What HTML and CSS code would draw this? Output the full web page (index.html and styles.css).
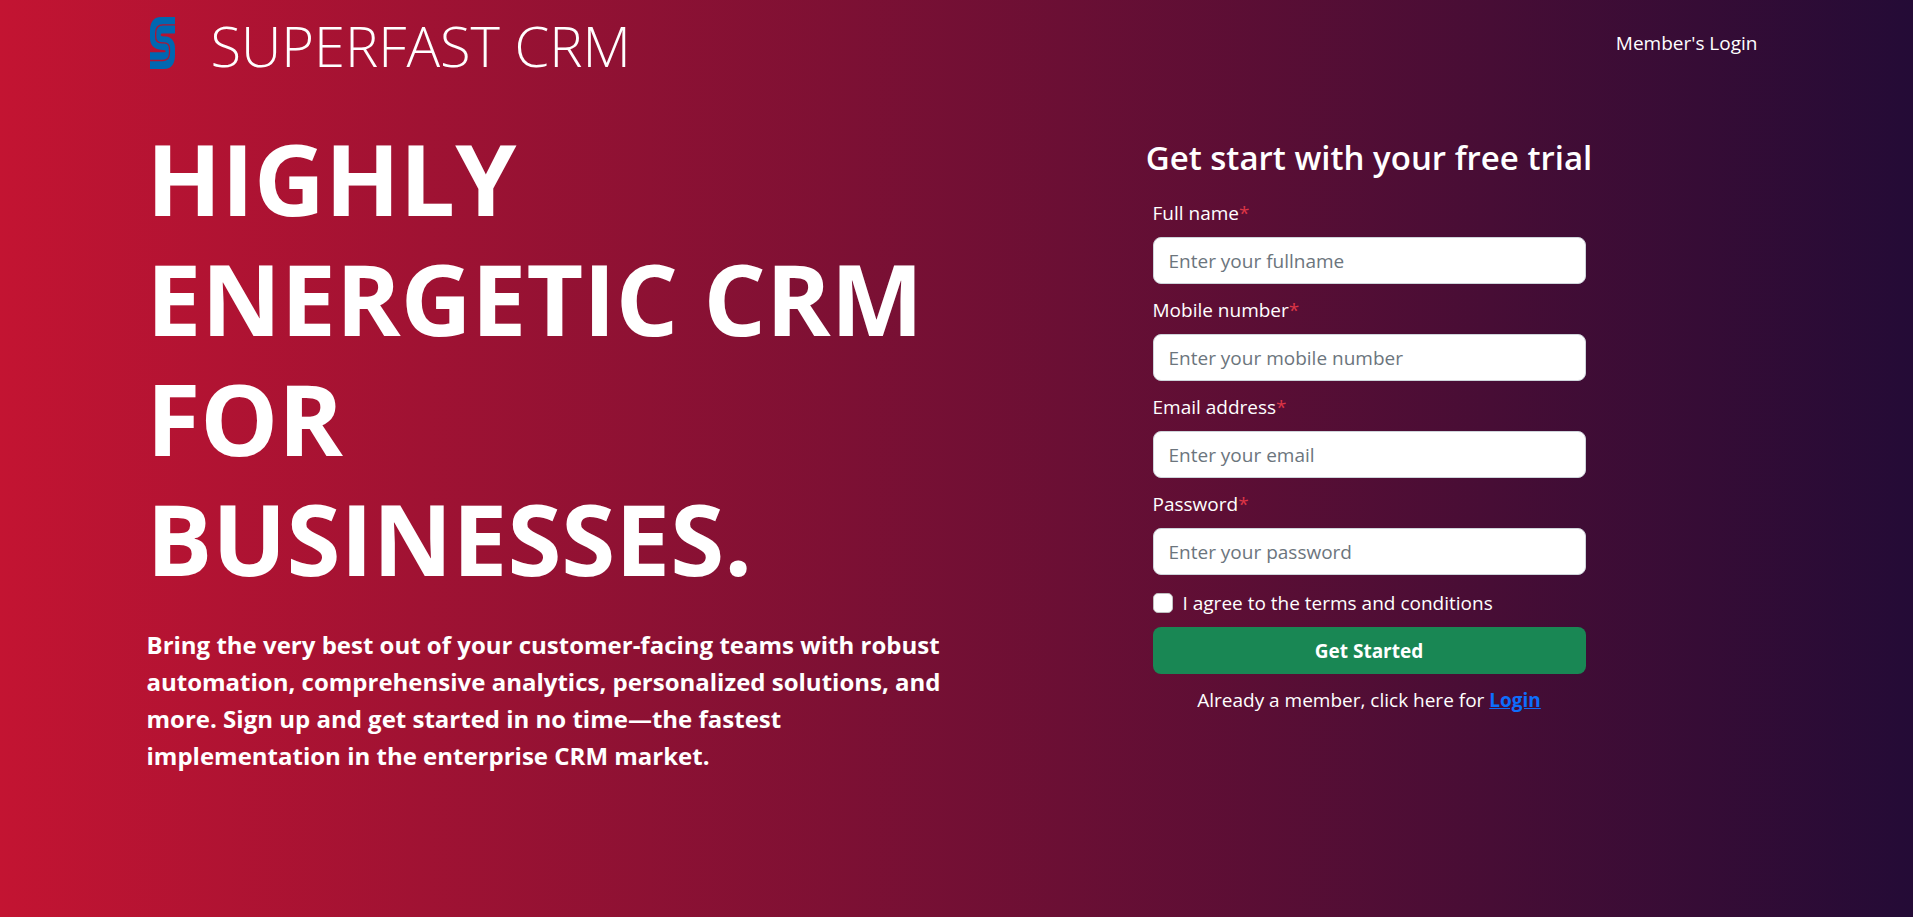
FILE: index.html
```html
<!DOCTYPE html>
<html lang="en">
<head>
<meta charset="utf-8">
<meta name="viewport" content="width=device-width, initial-scale=1">
<title>Superfast CRM</title>
<link rel="stylesheet" href="styles.css">
</head>
<body>
<div class="container">
  <header class="header">
    <div class="brand">
      <svg class="brand-mark" viewBox="0 0 25 52" aria-hidden="true">
        <path fill="#0067b1" d="M25 0H11C3 0 0 6 0 14v7c0 7 4 10.500 9 11.500l6 .7c1 .3 .8 2-.5 2H0V52h14c8 0 11-6 11-14v-7c0-7-4-11-9-11.500l-4-.3c-2-.5-1.500-2.700.5-2.700H25z"/>
        <path fill="none" stroke="#b11432" stroke-width="1.300" d="M25 7.800H13C7.500 7.800 5.700 11 5.700 16v4c0 4 2.300 5.800 6 5.800h2.300c4 0 5.500 2.200 5.500 6v4c0 5-2 7.700-6.500 7.700H0"/>
      </svg>
      <span class="brand-name">SUPERFAST CRM</span>
    </div>
    <a class="member-link" href="#login">Member's Login</a>
  </header>
  <main class="columns">
    <section class="hero">
      <h1 class="hero-title">HIGHLY<br>ENERGETIC CRM<br>FOR<br>BUSINESSES.</h1>
      <p class="hero-text">Bring the very best out of your customer-facing teams with robust automation, comprehensive analytics, personalized solutions, and more. Sign up and get started in no time—the fastest implementation in the enterprise CRM market.</p>
    </section>
    <section class="signup">
      <h2 class="signup-title">Get start with your free trial</h2>
      <form class="form">
        <div class="field">
          <label for="name">Full name<span class="required">*</span></label>
          <input class="control" id="name" type="text" placeholder="Enter your fullname">
        </div>
        <div class="field">
          <label for="mobile">Mobile number<span class="required">*</span></label>
          <input class="control" id="mobile" type="tel" placeholder="Enter your mobile number">
        </div>
        <div class="field">
          <label for="email">Email address<span class="required">*</span></label>
          <input class="control" id="email" type="email" placeholder="Enter your email">
        </div>
        <div class="field">
          <label for="password">Password<span class="required">*</span></label>
          <input class="control" id="password" type="password" placeholder="Enter your password">
        </div>
        <div class="agree">
          <input class="agree-box" id="agree" type="checkbox">
          <label for="agree">I agree to the terms and conditions</label>
        </div>
        <button class="submit" type="submit">Get Started</button>
        <p class="member-note">Already a member, click here for <a class="login-link" href="#login">Login</a></p>
      </form>
    </section>
  </main>
</div>
</body>
</html>
```

FILE: styles.css
```css
*,
*::before,
*::after {
  box-sizing: border-box;
}

body {
  margin: 0;
  min-height: 100vh;
  background: linear-gradient(to right, #c31432, #240b36);
  color: #fff;
  font-family: "Segoe UI", "Open Sans", "Noto Sans", sans-serif;
  font-size: 19px;
  line-height: 30px;
}

h1, h2, p {
  margin: 0;
}

.container {
  max-width: 1650px;
  margin: 0 auto;
  padding: 0 15px;
}

.header {
  display: flex;
  justify-content: space-between;
  align-items: center;
  padding: 7px 9px 7px 3px;
}

.brand {
  display: flex;
  align-items: center;
  gap: 36px;
}

.brand-mark {
  width: 25px;
  height: 52px;
}

.brand-name {
  padding-top: 4px;
  font-size: 56px;
  font-weight: 300;
  line-height: 68px;
}

.member-link {
  color: #fff;
  text-decoration: none;
}

.columns {
  display: grid;
  grid-template-columns: 1fr 1fr;
  gap: 30px;
  padding-top: 32px;
}

.hero-title {
  font-size: 98px;
  font-weight: 700;
  line-height: 120px;
}

.hero-text {
  margin-top: 28px;
  font-size: 24px;
  font-weight: 700;
  line-height: 37px;
}

.signup {
  display: flex;
  flex-direction: column;
  align-items: center;
  padding-top: 20px;
}

.signup-title {
  font-size: 33px;
  font-weight: 600;
  line-height: 40px;
}

.form {
  width: 100%;
  max-width: 433px;
  padding-top: 20px;
}

.field {
  display: flex;
  flex-direction: column;
  gap: 9px;
  margin-bottom: 11px;
}

.required {
  color: #dc3545;
}

.control {
  width: 100%;
  height: 47px;
  padding: 0 15px;
  border: 1px solid #ced4da;
  border-radius: 8px;
  background: #fff;
  color: #212529;
  font: inherit;
}

.control::placeholder {
  color: #6c757d;
  opacity: 1;
}

.agree {
  display: flex;
  align-items: center;
  gap: 10px;
  padding-top: 2px;
}

.agree-box {
  appearance: none;
  width: 20px;
  height: 20px;
  margin: 0;
  border: 1px solid #bfbfbf;
  border-radius: 5px;
  background: #fff;
}

.agree-box:checked {
  background: #0d6efd;
}

.submit {
  display: block;
  width: 100%;
  height: 47px;
  margin-top: 9px;
  border: 0;
  border-radius: 8px;
  background: #198754;
  color: #fff;
  font: inherit;
  font-weight: 700;
}

.member-note {
  margin-top: 11px;
  text-align: center;
}

.login-link {
  color: #0d6efd;
  font-weight: 700;
}
```
